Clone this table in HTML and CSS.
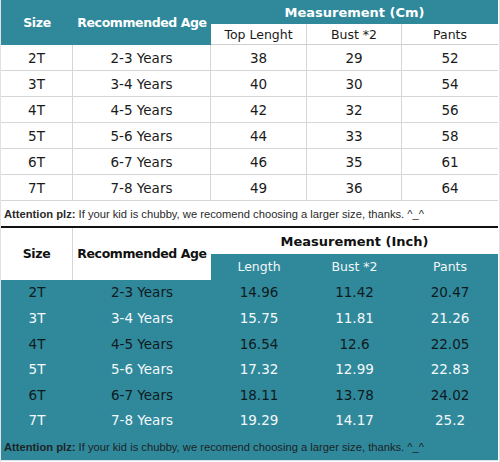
FILE: index.html
```html
<!DOCTYPE html>
<html lang="en">
<head>
    <meta charset="UTF-8">
    <meta name="viewport" content="width=device-width, initial-scale=1.0">
    <title>Size Chart</title>
    <link rel="stylesheet" href="styles.css">
</head>
<body>

<div class="chart">
    <table class="sizes cm">
        <colgroup>
            <col class="c-size"><col class="c-age"><col class="c-len"><col class="c-bust"><col class="c-pants">
        </colgroup>
        <tr class="head-top">
            <th rowspan="2" class="lead">Size</th>
            <th rowspan="2" class="lead">Recommended Age</th>
            <th colspan="3" class="group">Measurement (Cm)</th>
        </tr>
        <tr class="head-sub">
            <td>Top Lenght</td>
            <td>Bust *2</td>
            <td class="last">Pants</td>
        </tr>
        <tr><td>2T</td><td>2-3 Years</td><td>38</td><td>29</td><td class="last">52</td></tr>
        <tr><td>3T</td><td>3-4 Years</td><td>40</td><td>30</td><td class="last">54</td></tr>
        <tr><td>4T</td><td>4-5 Years</td><td>42</td><td>32</td><td class="last">56</td></tr>
        <tr><td>5T</td><td>5-6 Years</td><td>44</td><td>33</td><td class="last">58</td></tr>
        <tr><td>6T</td><td>6-7 Years</td><td>46</td><td>35</td><td class="last">61</td></tr>
        <tr><td>7T</td><td>7-8 Years</td><td>49</td><td>36</td><td class="last">64</td></tr>
        <tr class="note">
            <td colspan="5"><b>Attention plz:</b> If your kid is chubby, we recomend choosing a larger size, thanks. ^_^</td>
        </tr>
    </table>

    <table class="sizes inch">
        <colgroup>
            <col class="c-size"><col class="c-age"><col class="c-len"><col class="c-bust"><col class="c-pants">
        </colgroup>
        <tr class="head-top">
            <th rowspan="2" class="lead">Size</th>
            <th rowspan="2" class="lead">Recommended Age</th>
            <th colspan="3" class="group">Measurement (Inch)</th>
        </tr>
        <tr class="head-sub">
            <td>Length</td>
            <td>Bust *2</td>
            <td>Pants</td>
        </tr>
        <tr class="dark"><td>2T</td><td>2-3 Years</td><td>14.96</td><td>11.42</td><td>20.47</td></tr>
        <tr class="light"><td>3T</td><td>3-4 Years</td><td>15.75</td><td>11.81</td><td>21.26</td></tr>
        <tr class="dark"><td>4T</td><td>4-5 Years</td><td>16.54</td><td>12.6</td><td>22.05</td></tr>
        <tr class="light"><td>5T</td><td>5-6 Years</td><td>17.32</td><td>12.99</td><td>22.83</td></tr>
        <tr class="dark"><td>6T</td><td>6-7 Years</td><td>18.11</td><td>13.78</td><td>24.02</td></tr>
        <tr class="light"><td>7T</td><td>7-8 Years</td><td>19.29</td><td>14.17</td><td>25.2</td></tr>
        <tr class="note">
            <td colspan="5"><b>Attention plz:</b> If your kid is chubby, we recomend choosing a larger size, thanks. ^_^</td>
        </tr>
    </table>
</div>

</body>
</html>
```

FILE: styles.css
```css
body {
    margin: 0;
    background-color: #fff;
    font-family: "DejaVu Sans", sans-serif;
}

.chart {
    width: 498px;
    height: 462px;
    border-left: 1px solid #e2e2e2;
    border-right: 1px solid #e2e2e2;
    background-color: #fff;
}

.sizes {
    width: 497px;
    table-layout: fixed;
    border-collapse: separate;
    border-spacing: 0;
}

.c-size { width: 72px; }
.c-age { width: 138px; }
.c-len { width: 96px; }
.c-bust { width: 95px; }
.c-pants { width: 96px; }

.sizes th,
.sizes td {
    padding: 0;
    text-align: center;
    vertical-align: middle;
    white-space: nowrap;
    overflow: hidden;
}

.sizes th {
    font-size: 13px;
    font-weight: bold;
}

.sizes th.lead {
    font-size: 12.5px;
    letter-spacing: -0.4px;
}

/* centimetre table */

.cm th {
    background-color: #2f899b;
    color: #fff;
}

.cm .head-top {
    height: 24px;
}

.cm .head-sub {
    height: 21px;
}

.cm td {
    height: 25px;
    font-size: 13.5px;
    color: #1a1a1a;
    border-right: 1px solid #d6d6d6;
    border-bottom: 1px solid #d6d6d6;
}

.cm .head-sub td {
    height: 20px;
    font-size: 12.5px;
    border-bottom: 1px solid #cfcfcf;
}

.cm td.last {
    border-right: none;
}

/* inch table */

.inch {
    background-color: #2f899b;
}

.inch th {
    background-color: #fff;
    color: #111;
}

.inch th.lead:first-child {
    border-right: 1px solid #d6d6d6;
}

.inch .head-top {
    height: 26px;
}

.inch .head-sub {
    height: 22px;
}

.inch .head-sub td {
    color: #f2f6f8;
    font-size: 12.5px;
}

.inch td {
    height: 25.6px;
    font-size: 13.5px;
}

.inch .dark td {
    color: #0f1a1e;
}

.inch .light td {
    color: #f4f8fa;
}

/* notes */

.sizes .note td {
    height: 25px;
    text-align: left;
    padding-left: 3px;
    font-family: "Liberation Sans", Arial, sans-serif;
    font-size: 11.2px;
    color: #2a2a2a;
    border-right: none;
}

.cm .note td {
    border-bottom: 2px solid #111;
}

.inch .note td {
    height: 27px;
    color: #1d2326;
    border-bottom: 1px solid #dfe5e7;
}
```
